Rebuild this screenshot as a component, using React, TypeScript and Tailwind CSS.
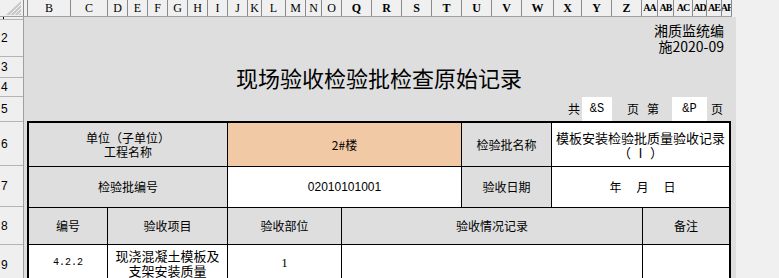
import React from "react";

const cols: [string, string, boolean][] = [
  ["", "w-[4px]", false],
  ["B", "w-[43px]", false],
  ["C", "w-[37px]", false],
  ["D", "w-[20px]", false],
  ["E", "w-[20px]", false],
  ["F", "w-[20px]", false],
  ["G", "w-[20px]", false],
  ["H", "w-[20px]", false],
  ["I", "w-[20px]", false],
  ["J", "w-[20px]", false],
  ["K", "w-[14px]", false],
  ["L", "w-[24px]", false],
  ["M", "w-[20px]", false],
  ["N", "w-[16px]", false],
  ["O", "w-[20px]", false],
  ["Q", "w-[30px]", true],
  ["R", "w-[30px]", true],
  ["S", "w-[30px]", true],
  ["T", "w-[30px]", true],
  ["U", "w-[30px]", true],
  ["V", "w-[30px]", true],
  ["W", "w-[32px]", true],
  ["X", "w-[28px]", true],
  ["Y", "w-[30px]", true],
  ["Z", "w-[30px]", true],
  ["AA", "w-[16px]", true],
  ["AB", "w-[16px]", true],
  ["AC", "w-[19px]", true],
  ["AD", "w-[14px]", true],
  ["AE", "w-[15px]", true],
  ["AF", "w-[10px]", true],
];

const rows: [string, string][] = [
  ["", "h-[3px]"],
  ["2", "h-[37px]"],
  ["3", "h-[21px]"],
  ["4", "h-[19px]"],
  ["5", "h-[25px]"],
  ["6", "h-[44px]"],
  ["7", "h-[41px]"],
  ["8", "h-[38px]"],
  ["9", "h-[40px]"],
];

const cell = "flex items-center justify-center text-center border-black";

export default function App() {
  return (
    <div className="w-[779px] h-[278px] overflow-hidden bg-[#f0f0f0] text-black font-['Noto_Sans_CJK_SC',sans-serif]">
      {/* column header */}
      <div className="flex h-[17px] border-b border-[#a0a0a0] w-[732px] bg-[#f0f0f0]">
        <div className="w-[24px] h-full border-r border-[#8a8a8a] relative shrink-0">
          <svg className="absolute right-[2px] bottom-[1px]" width="15" height="14" viewBox="0 0 15 14">
            <polygon points="15,0 15,14 0,14" fill="#c8c8c8" />
            <line x1="15" y1="3" x2="4" y2="14" stroke="#f4f4f4" strokeWidth="1" />
            <line x1="15" y1="7" x2="8" y2="14" stroke="#f4f4f4" strokeWidth="1" />
            <line x1="15" y1="11" x2="12" y2="14" stroke="#f4f4f4" strokeWidth="1" />
          </svg>
        </div>
        {cols.map(([label, w, bold], i) => (
          <div
            key={i}
            className={`${w} shrink-0 h-full border-r border-[#8a8a8a] flex items-center justify-center overflow-hidden font-['Liberation_Serif',serif] leading-none ${
              label.length > 1 ? "text-[10px] tracking-[-1px]" : "text-[12px]"
            } ${bold ? "font-bold" : ""}`}
          >
            {label}
          </div>
        ))}
      </div>

      <div className="flex">
        {/* row header */}
        <div className="w-[24px] shrink-0 flex flex-col border-r border-[#a0a0a0] bg-[#efefef]">
          {rows.map(([label, h], i) => (
            <div
              key={i}
              className={`${h} shrink-0 border-b border-[#b4b4b4] flex items-center pl-[1px] text-[12px] leading-none font-['Liberation_Sans',sans-serif] overflow-hidden`}
            >
              {i === 0 ? <span className="block w-[1px] h-[2px] bg-black ml-[2px]" /> : label}
            </div>
          ))}
        </div>

        {/* sheet */}
        <div className="w-[712px] shrink-0 h-[261px] bg-[#dedede] flex flex-col">
          <div className="h-[3px] shrink-0" />
          <div className="h-[37px] shrink-0 flex justify-end pr-[12px] pt-[2px]">
            <div className="text-right text-[14px] leading-[16px]">
              <div>湘质监统编</div>
              <div>施2020-09</div>
            </div>
          </div>
          <div className="h-[40px] shrink-0 ml-[3px] w-[704px] flex items-center justify-center">
            <span className="text-[22px] leading-none">现场验收检验批检查原始记录</span>
          </div>
          <div className="h-[24px] shrink-0 flex justify-end pr-[13px] text-[12px] leading-none">
            <div className="flex items-center">共</div>
            <div className="w-[30px] ml-[2px] bg-white flex items-center justify-center font-['Liberation_Mono',monospace] text-[12px]">
              &amp;S
            </div>
            <div className="flex items-center ml-[15px]">页</div>
            <div className="flex items-center ml-[8px]">第</div>
            <div className="w-[35px] ml-[13px] bg-white flex items-center justify-center font-['Liberation_Mono',monospace] text-[12px]">
              &amp;P
            </div>
            <div className="flex items-center ml-[4px]">页</div>
          </div>

          {/* table */}
          <div className="ml-[3px] w-[704px] border-2 border-black grid grid-cols-[79px_120px_114px_120px_90px_91px_86px] grid-rows-[44px_41px_37px_40px] text-[12px] leading-[14px]">
            {/* row 6 */}
            <div className={`${cell} col-span-2 border-r border-b`}>
              <div>
                单位（子单位）
                <br />
                工程名称
              </div>
            </div>
            <div className={`${cell} col-span-2 border-r border-b bg-[#f1c9a5]`}>2#楼</div>
            <div className={`${cell} border-r border-b`}>检验批名称</div>
            <div className={`${cell} col-span-2 border-b bg-white text-[13px] leading-[15px]`}>
              <div>
                模板安装检验批质量验收记录
                <br />
                （ Ⅰ ）
              </div>
            </div>

            {/* row 7 */}
            <div className={`${cell} col-span-2 border-r border-b`}>检验批编号</div>
            <div className={`${cell} col-span-2 border-r border-b bg-white font-['Liberation_Sans',sans-serif]`}>
              02010101001
            </div>
            <div className={`${cell} border-r border-b`}>验收日期</div>
            <div className={`${cell} col-span-2 border-b bg-white gap-[15px] pl-[4px]`}>
              <span>年</span>
              <span>月</span>
              <span>日</span>
            </div>

            {/* row 8 */}
            <div className={`${cell} border-r border-b`}>编号</div>
            <div className={`${cell} border-r border-b`}>验收项目</div>
            <div className={`${cell} border-r border-b`}>验收部位</div>
            <div className={`${cell} col-span-3 border-r border-b`}>验收情况记录</div>
            <div className={`${cell} border-b`}>备注</div>

            {/* row 9 */}
            <div className={`${cell} border-r bg-white font-['Liberation_Mono',monospace] text-[10px] pb-[5px]`}>4.2.2</div>
            <div className={`${cell} border-r bg-white text-[13px] leading-[15px] pb-[5px]`}>
              <div>
                现浇混凝土模板及
                <br />
                支架安装质量
              </div>
            </div>
            <div className={`${cell} border-r bg-white font-['Liberation_Serif',serif] text-[13px] pb-[5px]`}>1</div>
            <div className={`${cell} col-span-3 border-r bg-white`} />
            <div className={`${cell} bg-white`} />
          </div>
        </div>
      </div>
    </div>
  );
}
